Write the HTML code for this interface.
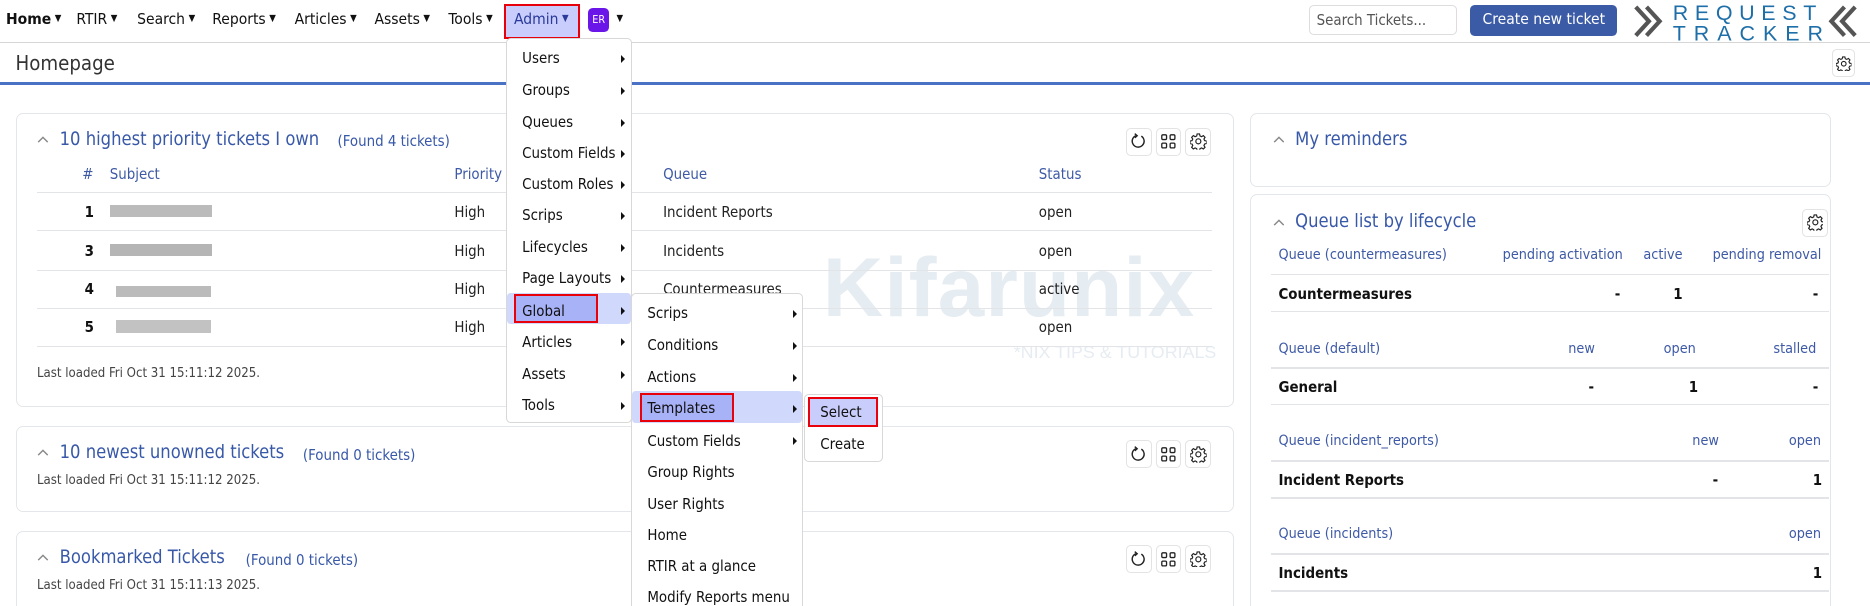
<!DOCTYPE html>
<html><head><meta charset="utf-8">
<style>
html,body{margin:0;padding:0;background:#fff;overflow:hidden}
body{width:1568px;height:508px;zoom:1.19260;position:relative;font-family:"DejaVu Sans Condensed","Liberation Sans",sans-serif;font-size:12.5px;color:#222}
.a{position:absolute;white-space:nowrap}
.nav{top:8px;font-size:13px;color:#111}
.car{font-size:8px;vertical-align:2px;margin-left:3px}
.box{position:absolute;border:1px solid #e3e6ea;border-radius:6px;background:transparent}
.ttl{font-size:15.3px;color:#3858a8}
.fnd{font-size:12.5px;color:#3858a8}
.hdr{color:#3e5aa6;font-size:12.5px}
.line{position:absolute;height:1px;background:#e2e4e8}
.ib{position:absolute;width:20px;height:22px;border:1px solid #e3e3e3;border-radius:4px;background:#fff}
.ib svg{position:absolute;left:3px;top:4px}
.menu{position:absolute;background:#fff;border:1px solid #d8d8d8;border-radius:4px}
.mi{position:absolute;left:13px;font-size:12.5px;color:#111;white-space:nowrap}
.tri{position:absolute;width:0;height:0;border-top:4px solid transparent;border-bottom:4px solid transparent;border-left:4px solid #111}
.ll{font-size:11px;color:#444}
.bold{font-weight:bold;color:#111}
.chev{position:absolute}
</style></head><body>
<svg width="0" height="0" style="position:absolute">
<defs>
<symbol id="rf" viewBox="0 0 14 14"><path d="M5 2.2 A5 5 0 1 0 9.5 2.6" stroke="#222" stroke-width="1.2" fill="none"/><path d="M4 0.5 L6 2.3 L4 4" stroke="#222" stroke-width="1.2" fill="none"/></symbol>
<symbol id="gr" viewBox="0 0 14 14"><rect x="1.5" y="1.5" width="4" height="4" rx="1" stroke="#222" fill="none" stroke-width="1.1"/><rect x="8.5" y="1.5" width="4" height="4" rx="1" stroke="#222" fill="none" stroke-width="1.1"/><rect x="1.5" y="8.5" width="4" height="4" rx="1" stroke="#222" fill="none" stroke-width="1.1"/><rect x="8.5" y="8.5" width="4" height="4" rx="1" stroke="#222" fill="none" stroke-width="1.1"/></symbol>
<symbol id="gear" viewBox="0 0 14 14"><path d="M6 0.8h2l0.4 1.7 1.3 0.6 1.5-0.9 1.4 1.4-0.9 1.5 0.6 1.3 1.7 0.4v2l-1.7 0.4-0.6 1.3 0.9 1.5-1.4 1.4-1.5-0.9-1.3 0.6-0.4 1.7h-2l-0.4-1.7-1.3-0.6-1.5 0.9-1.4-1.4 0.9-1.5-0.6-1.3-1.7-0.4v-2l1.7-0.4 0.6-1.3-0.9-1.5 1.4-1.4 1.5 0.9 1.3-0.6z" stroke="#222" stroke-width="1" fill="none"/><circle cx="7" cy="7" r="2.1" stroke="#222" stroke-width="1" fill="none"/></symbol>
<symbol id="ch" viewBox="0 0 10 6"><path d="M1 5.5 L5 1.5 L9 5.5" stroke="#888" stroke-width="1.2" fill="none"/></symbol>
</defs></svg>
<!-- watermark -->
<div class="a" style="left:690px;top:200px;font-size:70px;font-weight:bold;color:#e5ecf2;letter-spacing:1px;font-family:'Liberation Sans',sans-serif">Kifarunix</div>
<div class="a" style="left:850px;top:287px;font-size:15px;color:#e6ecf1;font-family:'Liberation Sans',sans-serif">*NIX TIPS &amp; TUTORIALS</div>

<!-- nav -->
<div class="a nav" style="left:5px;font-weight:bold">Home<span class="car">▼</span></div>
<div class="a nav" style="left:64px">RTIR<span class="car">▼</span></div>
<div class="a nav" style="left:115px">Search<span class="car">▼</span></div>
<div class="a nav" style="left:178px">Reports<span class="car">▼</span></div>
<div class="a nav" style="left:247px">Articles<span class="car">▼</span></div>
<div class="a nav" style="left:314px">Assets<span class="car">▼</span></div>
<div class="a nav" style="left:376px">Tools<span class="car">▼</span></div>
<div class="a" style="left:423px;top:3px;width:60px;height:26px;background:#c9cdfb;border:2px solid #e8000b"></div>
<div class="a nav" style="left:431px;color:#2a3a9a">Admin<span class="car">▼</span></div>
<div class="a" style="left:493px;top:7px;width:18px;height:20px;background:#6a16e8;border-radius:4px;color:#fff;font-size:9px;text-align:center;line-height:20px">ER</div>
<div class="a nav" style="left:514px"><span class="car">▼</span></div>
<div class="line" style="left:0;top:35px;width:1568px;background:#d6d6d6"></div>

<div class="a" style="left:1098px;top:4px;width:122px;height:24px;border:1px solid #ddd;border-radius:4px"></div>
<div class="a" style="left:1104px;top:9px;font-size:12.5px;color:#555">Search Tickets...</div>
<div class="a" style="left:1233px;top:4px;width:123px;height:26px;background:#3c5ba6;border-radius:4px;color:#fff;font-size:13px;text-align:center;line-height:25px">Create new ticket</div>
<svg class="a" style="left:1368px;top:1px" width="200" height="34">
<path d="M4 5 L15 17 L4 29 M13 5 L24 17 L13 29" stroke="#555" stroke-width="3.5" fill="none"/>
<path d="M179 5 L168 17 L179 29 M188 5 L177 17 L188 29" stroke="#555" stroke-width="3.5" fill="none"/>
<text x="35" y="16" font-family="Liberation Sans" font-size="18" fill="#1e6fa8" letter-spacing="5.6" textLength="126">REQUEST</text>
<text x="35" y="33" font-family="Liberation Sans" font-size="18" fill="#1e6fa8" textLength="126" lengthAdjust="spacing">TRACKER</text>
</svg>

<div class="a" style="left:13px;top:43px;font-size:17px;color:#333">Homepage</div>
<div class="ib" style="left:1536px;top:41px;width:18px;height:22px"><svg width="13" height="13" style="left:3px;top:5px"><use href="#gear"/></svg></div>
<div class="line" style="left:0;top:69px;width:1568px;height:2px;background:#4a72c4"></div>

<!-- box1 -->
<div class="box" style="left:13px;top:95px;width:1020px;height:245px"></div>
<svg class="chev" style="left:31px;top:113px" width="10" height="7"><use href="#ch"/></svg>
<div class="a ttl" style="left:50px;top:108px">10 highest priority tickets I own</div>
<div class="a fnd" style="left:283px;top:111px">(Found 4 tickets)</div>
<div class="ib" style="left:944px;top:107px"><svg width="14" height="14"><use href="#rf"/></svg></div>
<div class="ib" style="left:969px;top:107px"><svg width="14" height="14"><use href="#gr"/></svg></div>
<div class="ib" style="left:994px;top:107px"><svg width="14" height="14"><use href="#gear"/></svg></div>
<div class="a hdr" style="left:69px;top:138px">#</div>
<div class="a hdr" style="left:92px;top:138px">Subject</div>
<div class="a hdr" style="left:381px;top:138px">Priority</div>
<div class="a hdr" style="left:556px;top:138px">Queue</div>
<div class="a hdr" style="left:871px;top:138px">Status</div>
<div class="line" style="left:31px;top:161px;width:985px"></div>
<div class="line" style="left:31px;top:193px;width:985px"></div>
<div class="line" style="left:31px;top:226px;width:985px"></div>
<div class="line" style="left:31px;top:258px;width:985px"></div>
<div class="line" style="left:31px;top:290px;width:985px"></div>
<div class="a bold" style="left:71px;top:170px">1</div><div class="a" style="left:92px;top:172px;width:86px;height:10px;background:#bbb"></div><div class="a" style="left:381px;top:170px">High</div><div class="a" style="left:556px;top:170px">Incident Reports</div><div class="a" style="left:871px;top:170px">open</div>
<div class="a bold" style="left:71px;top:203px">3</div><div class="a" style="left:92px;top:205px;width:86px;height:10px;background:#b5b5b5"></div><div class="a" style="left:381px;top:203px">High</div><div class="a" style="left:556px;top:203px">Incidents</div><div class="a" style="left:871px;top:203px">open</div>
<div class="a bold" style="left:71px;top:235px">4</div><div class="a" style="left:97px;top:240px;width:80px;height:9px;background:#bbb"></div><div class="a" style="left:381px;top:235px">High</div><div class="a" style="left:556px;top:235px">Countermeasures</div><div class="a" style="left:871px;top:235px">active</div>
<div class="a bold" style="left:71px;top:267px">5</div><div class="a" style="left:97px;top:268px;width:80px;height:11px;background:#c2c2c2"></div><div class="a" style="left:381px;top:267px">High</div><div class="a" style="left:871px;top:267px">open</div>
<div class="a ll" style="left:31px;top:307px">Last loaded Fri Oct 31 15:11:12 2025.</div>

<!-- box2 -->
<div class="box" style="left:13px;top:357px;width:1020px;height:71px"></div>
<svg class="chev" style="left:31px;top:376px" width="10" height="7"><use href="#ch"/></svg>
<div class="a ttl" style="left:50px;top:371px">10 newest unowned tickets</div>
<div class="a fnd" style="left:254px;top:374px">(Found 0 tickets)</div>
<div class="ib" style="left:944px;top:369px"><svg width="14" height="14"><use href="#rf"/></svg></div>
<div class="ib" style="left:969px;top:369px"><svg width="14" height="14"><use href="#gr"/></svg></div>
<div class="ib" style="left:994px;top:369px"><svg width="14" height="14"><use href="#gear"/></svg></div>
<div class="a ll" style="left:31px;top:397px">Last loaded Fri Oct 31 15:11:12 2025.</div>

<!-- box3 -->
<div class="box" style="left:13px;top:445px;width:1020px;height:80px"></div>
<svg class="chev" style="left:31px;top:464px" width="10" height="7"><use href="#ch"/></svg>
<div class="a ttl" style="left:50px;top:459px">Bookmarked Tickets</div>
<div class="a fnd" style="left:206px;top:462px">(Found 0 tickets)</div>
<div class="ib" style="left:944px;top:457px"><svg width="14" height="14"><use href="#rf"/></svg></div>
<div class="ib" style="left:969px;top:457px"><svg width="14" height="14"><use href="#gr"/></svg></div>
<div class="ib" style="left:994px;top:457px"><svg width="14" height="14"><use href="#gear"/></svg></div>
<div class="a ll" style="left:31px;top:485px">Last loaded Fri Oct 31 15:11:13 2025.</div>

<!-- right -->
<div class="box" style="left:1048px;top:95px;width:486px;height:60px"></div>
<svg class="chev" style="left:1067px;top:113px" width="10" height="7"><use href="#ch"/></svg>
<div class="a ttl" style="left:1086px;top:108px">My reminders</div>
<div class="box" style="left:1048px;top:163px;width:486px;height:360px"></div>
<svg class="chev" style="left:1067px;top:183px" width="10" height="7"><use href="#ch"/></svg>
<div class="a ttl" style="left:1086px;top:177px">Queue list by lifecycle</div>
<div class="ib" style="left:1511px;top:175px;width:20px"><svg width="14" height="14"><use href="#gear"/></svg></div>
<div class="a hdr" style="left:1072px;top:207px;font-size:12px">Queue (countermeasures)</div>
<div class="a hdr" style="left:1260px;top:207px;font-size:12px">pending activation</div>
<div class="a hdr" style="left:1378px;top:207px;font-size:12px">active</div>
<div class="a hdr" style="left:1436px;top:207px;font-size:12px">pending removal</div>
<div class="line" style="left:1066px;top:230px;width:468px"></div>
<div class="a bold" style="left:1072px;top:239px">Countermeasures</div><div class="a bold" style="left:1354px;top:239px">-</div><div class="a bold" style="left:1403px;top:239px">1</div><div class="a bold" style="left:1520px;top:239px">-</div>
<div class="line" style="left:1066px;top:261px;width:468px"></div>
<div class="a hdr" style="left:1072px;top:286px;font-size:12px">Queue (default)</div><div class="a hdr" style="left:1315px;top:286px;font-size:12px">new</div><div class="a hdr" style="left:1395px;top:286px;font-size:12px">open</div><div class="a hdr" style="left:1487px;top:286px;font-size:12px">stalled</div>
<div class="line" style="left:1066px;top:308px;width:468px"></div>
<div class="a bold" style="left:1072px;top:317px">General</div><div class="a bold" style="left:1332px;top:317px">-</div><div class="a bold" style="left:1416px;top:317px">1</div><div class="a bold" style="left:1520px;top:317px">-</div>
<div class="line" style="left:1066px;top:339px;width:468px"></div>
<div class="a hdr" style="left:1072px;top:363px;font-size:12px">Queue (incident_reports)</div><div class="a hdr" style="left:1419px;top:363px;font-size:12px">new</div><div class="a hdr" style="left:1500px;top:363px;font-size:12px">open</div>
<div class="line" style="left:1066px;top:386px;width:468px"></div>
<div class="a bold" style="left:1072px;top:395px">Incident Reports</div><div class="a bold" style="left:1436px;top:395px">-</div><div class="a bold" style="left:1520px;top:395px">1</div>
<div class="line" style="left:1066px;top:417px;width:468px"></div>
<div class="a hdr" style="left:1072px;top:441px;font-size:12px">Queue (incidents)</div><div class="a hdr" style="left:1500px;top:441px;font-size:12px">open</div>
<div class="line" style="left:1066px;top:464px;width:468px"></div>
<div class="a bold" style="left:1072px;top:473px">Incidents</div><div class="a bold" style="left:1520px;top:473px">1</div>
<div class="line" style="left:1066px;top:495px;width:468px"></div>

<!-- admin menu -->
<div class="menu" style="left:424px;top:32px;width:104px;height:321px">
<div class="a" style="left:0;top:213px;width:104px;height:26px;background:#d0d9fb;border-radius:3px"></div>
<div class="a" style="left:6px;top:214px;width:67px;height:21px;background:#a8b2f7;border:2px solid #e8000b"></div>
<div class="mi" style="top:8px">Users</div><div class="tri" style="left:96px;top:13px"></div>
<div class="mi" style="top:35px">Groups</div><div class="tri" style="left:96px;top:40px"></div>
<div class="mi" style="top:62px">Queues</div><div class="tri" style="left:96px;top:67px"></div>
<div class="mi" style="top:88px">Custom Fields</div><div class="tri" style="left:96px;top:93px"></div>
<div class="mi" style="top:114px">Custom Roles</div><div class="tri" style="left:96px;top:119px"></div>
<div class="mi" style="top:140px">Scrips</div><div class="tri" style="left:96px;top:145px"></div>
<div class="mi" style="top:167px">Lifecycles</div><div class="tri" style="left:96px;top:172px"></div>
<div class="mi" style="top:193px">Page Layouts</div><div class="tri" style="left:96px;top:198px"></div>
<div class="mi" style="top:220px">Global</div><div class="tri" style="left:96px;top:225px"></div>
<div class="mi" style="top:246px">Articles</div><div class="tri" style="left:96px;top:251px"></div>
<div class="mi" style="top:273px">Assets</div><div class="tri" style="left:96px;top:278px"></div>
<div class="mi" style="top:299px">Tools</div><div class="tri" style="left:96px;top:304px"></div>
</div>

<!-- global submenu -->
<div class="menu" style="left:529px;top:246px;width:143px;height:280px">
<div class="a" style="left:0;top:81px;width:143px;height:27px;background:#d0d9fb;border-radius:3px"></div>
<div class="a" style="left:7px;top:83px;width:75px;height:21px;background:#a8b2f7;border:2px solid #e8000b"></div>
<div class="mi" style="top:8px">Scrips</div><div class="tri" style="left:135px;top:13px"></div>
<div class="mi" style="top:35px">Conditions</div><div class="tri" style="left:135px;top:40px"></div>
<div class="mi" style="top:62px">Actions</div><div class="tri" style="left:135px;top:67px"></div>
<div class="mi" style="top:88px">Templates</div><div class="tri" style="left:135px;top:93px"></div>
<div class="mi" style="top:115px">Custom Fields</div><div class="tri" style="left:135px;top:120px"></div>
<div class="mi" style="top:141px">Group Rights</div>
<div class="mi" style="top:168px">User Rights</div>
<div class="mi" style="top:194px">Home</div>
<div class="mi" style="top:220px">RTIR at a glance</div>
<div class="mi" style="top:246px">Modify Reports menu</div>
</div>

<!-- templates submenu -->
<div class="menu" style="left:674px;top:330px;width:65px;height:56px">
<div class="a" style="left:3px;top:2px;width:55px;height:22px;background:#c9cdfb;border:2px solid #e8000b"></div>
<div class="mi" style="top:7px">Select</div>
<div class="mi" style="top:34px">Create</div>
</div>
</body></html>
